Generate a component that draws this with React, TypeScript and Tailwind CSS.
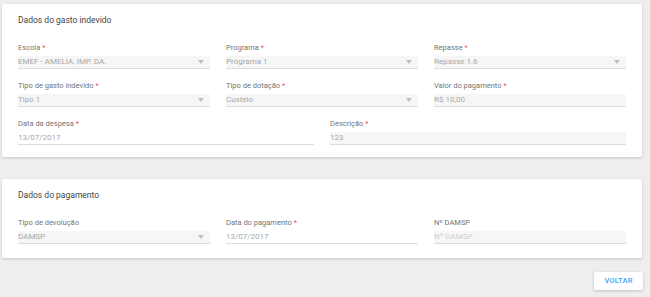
import React from 'react'

type Field = {
  label: string
  value: string
  required?: boolean
  select?: boolean
  filled?: boolean
  placeholder?: boolean
}

function Caret() {
  return (
    <svg width="6" height="4" viewBox="0 0 6 4" className="shrink-0">
      <path d="M0 0 L6 0 L3 4 Z" fill="#bdbdbd" />
    </svg>
  )
}

function FormField({ f }: { f: Field }) {
  return (
    <div className="flex flex-col">
      <div className="h-[10px] leading-[10px] text-[7.5px] text-[#757575]">
        {f.label}
        {f.required && <span className="text-[#ef5350] ml-[2px]">*</span>}
      </div>
      <div
        className={`mt-[3px] h-[13px] flex items-center justify-between pr-[6px] border-b border-[#dcdcdc] ${
          f.filled ? 'bg-[#f6f6f6]' : 'bg-white'
        }`}
      >
        <span className={`text-[8px] leading-[12px] ${f.placeholder ? 'text-[#d0d0d0]' : 'text-[#a8a8a8]'}`}>
          {f.value}
        </span>
        {f.select && <Caret />}
      </div>
    </div>
  )
}

function Card({ title, children }: { title: string; children: React.ReactNode }) {
  return (
    <div className="bg-white rounded-[2px] shadow-[0_1px_3px_rgba(0,0,0,0.18)] px-4 pt-[10px]">
      <div className="h-[12px] leading-[12px] text-[8.5px] text-[#444]">{title}</div>
      {children}
    </div>
  )
}

export default function App() {
  const gasto: Field[] = [
    { label: 'Escola', value: 'EMEF - AMELIA, IMP. DA.', required: true, select: true, filled: true },
    { label: 'Programa', value: 'Programa 1', required: true, select: true, filled: true },
    { label: 'Repasse', value: 'Repasse 1.6', required: true, select: true, filled: true },
    { label: 'Tipo de gasto indevido', value: 'Tipo 1', required: true, select: true, filled: true },
    { label: 'Tipo de dotação', value: 'Custeio', required: true, select: true, filled: true },
    { label: 'Valor do pagamento', value: 'R$ 10,00', required: true, filled: true },
  ]
  const pagamento: Field[] = [
    { label: 'Tipo de devolução', value: 'DAMSP', select: true, filled: true },
    { label: 'Data do pagamento', value: '13/07/2017', required: true },
    { label: 'Nº DAMSP', value: 'Nº DAMSP', filled: true, placeholder: true },
  ]

  return (
    <div
      className="w-[650px] h-[297px] bg-[#eeeeee] pl-[2px] pr-[8px] pt-[4px] overflow-hidden"
      style={{ fontFamily: 'Roboto, "Liberation Sans", sans-serif' }}
    >
      <Card title="Dados do gasto indevido">
        <div className="mt-[17px] grid grid-cols-3 gap-x-4 gap-y-[12px]">
          {gasto.map((f) => (
            <FormField key={f.label} f={f} />
          ))}
        </div>
        <div className="mt-[12px] pb-[12px] grid grid-cols-2 gap-x-4">
          <FormField f={{ label: 'Data da despesa', value: '13/07/2017', required: true }} />
          <FormField f={{ label: 'Descrição', value: '123', required: true, filled: true }} />
        </div>
      </Card>

      <div className="mt-[22px]">
        <Card title="Dados do pagamento">
          <div className="mt-[17px] pb-[14px] grid grid-cols-3 gap-x-4">
            {pagamento.map((f) => (
              <FormField key={f.label} f={f} />
            ))}
          </div>
        </Card>
      </div>

      <div className="flex justify-end mt-[14px] -mr-[1px]">
        <button className="w-[49px] h-[18px] bg-white rounded-[2px] shadow-[0_1px_3px_rgba(0,0,0,0.2)] text-[7.5px] font-medium text-[#42a5f5] tracking-[0.2px]">
          VOLTAR
        </button>
      </div>
    </div>
  )
}
